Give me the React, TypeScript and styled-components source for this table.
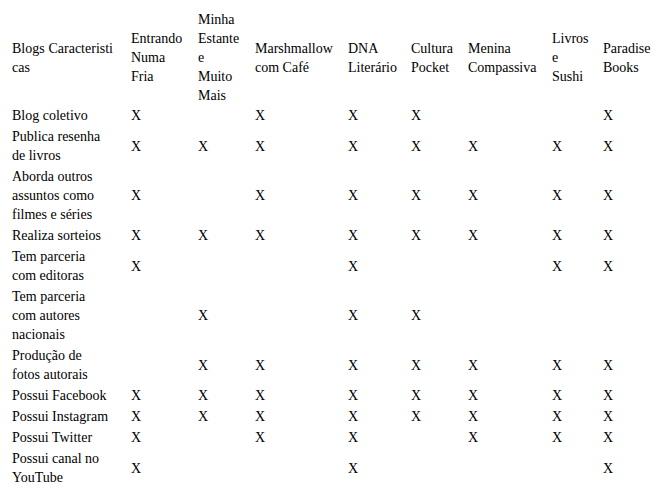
import React from "react";
import styled, { createGlobalStyle } from "styled-components";

const GlobalStyle = createGlobalStyle`
  body {
    margin: 8px;
    background: #ffffff;
    color: #000000;
    font-family: "Liberation Serif", "Times New Roman", serif;
  }
`;

const Table = styled.table`
  border-collapse: collapse;
  table-layout: fixed;
  width: 646px;
  margin: 2px 4px 1px;
  font-family: "Liberation Serif", "Times New Roman", serif;
  font-size: 14px;
  line-height: 19px;
  color: #000000;
`;

const HeadCell = styled.th<{ $pad: number; $first?: boolean }>`
  padding: 0 ${(p) => p.$pad}px 0 0;
  font-weight: normal;
  text-align: ${(p) => (p.$first ? "justify" : "left")};
  vertical-align: middle;
  white-space: ${(p) => (p.$first ? "normal" : "nowrap")};
  word-break: ${(p) => (p.$first ? "break-all" : "normal")};
`;

const Cell = styled.td<{ $pad: number }>`
  padding: 1px ${(p) => p.$pad}px 1px 0;
  text-align: left;
  vertical-align: middle;
  white-space: nowrap;
`;

const columns = [
  { title: ["Blogs Caracteristicas"], width: 119, pad: 18 },
  { title: ["Entrando", "Numa", "Fria"], width: 67, pad: 8 },
  { title: ["Minha", "Estante", "e", "Muito", "Mais"], width: 57, pad: 8 },
  { title: ["Marshmallow", "com Café"], width: 93, pad: 8 },
  { title: ["DNA", "Literário"], width: 63, pad: 8 },
  { title: ["Cultura", "Pocket"], width: 57, pad: 8 },
  { title: ["Menina", "Compassiva"], width: 84, pad: 8 },
  { title: ["Livros", "e", "Sushi"], width: 51, pad: 4 },
  { title: ["Paradise", "Books"], width: 57, pad: 4 },
];

// 1 = marcado com X
const rows: [string[], number[]][] = [
  [["Blog coletivo"], [1, 0, 1, 1, 1, 0, 0, 1]],
  [["Publica resenha", "de livros"], [1, 1, 1, 1, 1, 1, 1, 1]],
  [["Aborda outros", "assuntos como", "filmes e séries"], [1, 0, 1, 1, 1, 1, 1, 1]],
  [["Realiza sorteios"], [1, 1, 1, 1, 1, 1, 1, 1]],
  [["Tem parceria", "com editoras"], [1, 0, 0, 1, 0, 0, 1, 1]],
  [["Tem parceria", "com autores", "nacionais"], [0, 1, 0, 1, 1, 0, 0, 0]],
  [["Produção de", "fotos autorais"], [0, 1, 1, 1, 1, 1, 1, 1]],
  [["Possui Facebook"], [1, 1, 1, 1, 1, 1, 1, 1]],
  [["Possui Instagram"], [1, 1, 1, 1, 1, 1, 1, 1]],
  [["Possui Twitter"], [1, 0, 1, 1, 0, 1, 1, 1]],
  [["Possui canal no", "YouTube"], [1, 0, 0, 1, 0, 0, 0, 1]],
];

function Lines({ items }: { items: string[] }) {
  return (
    <>
      {items.map((line, i) => (
        <React.Fragment key={i}>
          {i > 0 && <br />}
          {line}
        </React.Fragment>
      ))}
    </>
  );
}

function App() {
  return (
    <>
      <GlobalStyle />
      <Table>
        <colgroup>
          {columns.map((c) => (
            <col key={c.title.join(" ")} style={{ width: c.width }} />
          ))}
        </colgroup>
        <thead>
          <tr>
            {columns.map((c, i) => (
              <HeadCell key={c.title.join(" ")} $pad={c.pad} $first={i === 0}>
                <Lines items={c.title} />
              </HeadCell>
            ))}
          </tr>
        </thead>
        <tbody>
          {rows.map(([label, marks]) => (
            <tr key={label.join(" ")}>
              <Cell $pad={columns[0].pad}>
                <Lines items={label} />
              </Cell>
              {marks.map((m, i) => (
                <Cell key={i} $pad={columns[i + 1].pad}>
                  {m ? "X" : ""}
                </Cell>
              ))}
            </tr>
          ))}
        </tbody>
      </Table>
    </>
  );
}

export default App;
